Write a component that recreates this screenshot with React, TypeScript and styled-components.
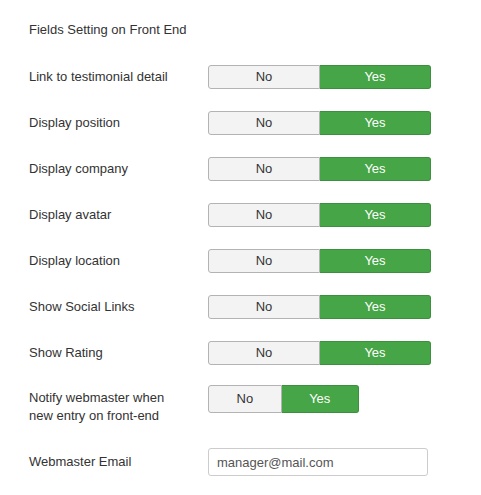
import React from "react";
import styled, { createGlobalStyle } from "styled-components";

const Global = createGlobalStyle`
  html, body { margin: 0; padding: 0; background: #fff; }
  body { font-family: "Liberation Sans", Arial, sans-serif; font-size: 13px; color: #333; }
`;

const Page = styled.div`
  padding: 18px 0 0 29px;
  display: flex;
  flex-direction: column;
`;

const Heading = styled.div`
  height: 24px;
  line-height: 24px;
  margin-bottom: 23px;
`;

const Row = styled.div<{ $top?: boolean; $gap: number }>`
  display: flex;
  align-items: ${(p) => (p.$top ? "flex-start" : "center")};
  margin-bottom: ${(p) => p.$gap}px;
`;

const Label = styled.div<{ $pad?: number }>`
  width: 179px;
  flex: none;
  line-height: 18px;
  padding-top: ${(p) => p.$pad ?? 0}px;
`;

const Toggle = styled.div<{ $wide?: boolean; $h: number }>`
  display: flex;
  width: ${(p) => (p.$wide ? "223px" : "auto")};
  height: ${(p) => p.$h}px;
  box-sizing: border-box;
`;

const Opt = styled.div<{ $on?: boolean; $wide?: boolean }>`
  flex: ${(p) => (p.$wide ? "1 1 0" : "none")};
  padding: ${(p) => (p.$wide ? "0 0 1px 0" : "0 27.5px 1px 27.5px")};
  display: flex;
  align-items: center;
  justify-content: center;
  box-sizing: border-box;
  font-size: 13px;
  color: ${(p) => (p.$on ? "#fff" : "#333")};
  background: ${(p) => (p.$on ? "#46a546" : "#f3f3f3")};
  border: 1px solid ${(p) => (p.$on ? "#3c8f3c" : "#b3b3b3")};
  border-radius: ${(p) => (p.$on ? "0 3px 3px 0" : "3px 0 0 3px")};
  ${(p) => (p.$on ? "border-left: none;" : "")}
`;

const Input = styled.div`
  width: 220px;
  height: 28px;
  box-sizing: border-box;
  border: 1px solid #ccc;
  border-radius: 3px;
  padding: 0 8px;
  display: flex;
  align-items: center;
  color: #555;
  font-size: 13px;
`;

const YesNo: React.FC<{ wide?: boolean; h: number }> = ({ wide, h }) => (
  <Toggle $wide={wide} $h={h}>
    <Opt $wide={wide}>No</Opt>
    <Opt $wide={wide} $on>
      Yes
    </Opt>
  </Toggle>
);

const rows = [
  "Link to testimonial detail",
  "Display position",
  "Display company",
  "Display avatar",
  "Display location",
  "Show Social Links",
  "Show Rating",
];

export default function App() {
  return (
    <>
      <Global />
      <Page>
        <Heading>Fields Setting on Front End</Heading>
        {rows.map((r, i) => (
          <Row key={r} $gap={i === rows.length - 1 ? 20 : 22}>
            <Label>{r}</Label>
            <YesNo wide h={24} />
          </Row>
        ))}
        <Row $top $gap={23}>
          <Label $pad={4}>
            Notify webmaster when
            <br />
            new entry on front-end
          </Label>
          <YesNo h={28} />
        </Row>
        <Row $gap={0}>
          <Label>Webmaster Email</Label>
          <Input>manager@mail.com</Input>
        </Row>
      </Page>
    </>
  );
}
